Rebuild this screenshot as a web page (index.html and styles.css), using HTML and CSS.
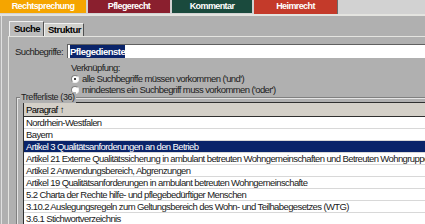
FILE: index.html
```html
<!DOCTYPE html>
<html lang="de">
<head>
<meta charset="utf-8">
<link rel="stylesheet" href="styles.css">
</head>
<body>
<div class="topbar">
  <div class="tab t-recht">Rechtsprechung</div>
  <div class="tab t-pflege">Pflegerecht</div>
  <div class="tab t-komm">Kommentar</div>
  <div class="tab t-heim">Heimrecht</div>
</div>
<div class="main">
  <div class="subtabs">
    <div class="stab active">Suche</div>
    <div class="stab">Struktur</div>
  </div>
  <div class="panel">
    <div class="searchrow">
      <span class="lbl">Suchbegriffe:</span>
      <div class="input"><span class="sel">Pflegedienste</span></div>
    </div>
    <div class="verk">
      <div class="vlbl">Verknüpfung:</div>
      <div class="radio"><span class="rb on"></span>alle Suchbegriffe müssen vorkommen ('und')</div>
      <div class="radio"><span class="rb"></span>mindestens ein Suchbegriff muss vorkommen ('oder')</div>
    </div>
    <div class="group">
      <div class="glegend">Trefferliste (36)</div>
      <div class="table">
        <div class="thead">Paragraf ↑</div>
        <div class="row">Nordrhein-Westfalen</div>
        <div class="row">Bayern</div>
        <div class="row selected">Artikel 3 Qualitätsanforderungen an den Betrieb</div>
        <div class="row">Artikel 21 Externe Qualitätssicherung in ambulant betreuten Wohngemeinschaften und Betreuten Wohngruppen</div>
        <div class="row">Artikel 2 Anwendungsbereich, Abgrenzungen</div>
        <div class="row">Artikel 19 Qualitätsanforderungen in ambulant betreuten Wohngemeinschafte</div>
        <div class="row">5.2 Charta der Rechte hilfe- und pflegebedürftiger Menschen</div>
        <div class="row">3.10.2 Auslegungsregeln zum Geltungsbereich des Wohn- und Teilhabegesetzes (WTG)</div>
        <div class="row">3.6.1 Stichwortverzeichnis</div>
      </div>
    </div>
  </div>
</div>
</body>
</html>
```
FILE: styles.css
```css
html, body {
  margin: 0;
  padding: 0;
  height: 100%;
  overflow: hidden;
}
body {
  background: #b0b0b0;
  font-family: "Liberation Sans", Arial, sans-serif;
  font-size: 9.5px;
  letter-spacing: -0.6px;
  color: #000;
}
.topbar {
  display: flex;
  gap: 2px;
  height: 14px;
  background: #d2d2d2;
  border-bottom: 2px solid #e4e4e0;
  align-items: flex-start;
}
.tab {
  width: 86px;
  height: 13px;
  line-height: 13px;
  color: #fff;
  font-weight: bold;
  text-align: center;
  font-size: 9px;
  letter-spacing: -0.6px;
}
.t-recht { background: #f5a500; }
.t-pflege { background: #8a1f2e; width: 82px; }
.t-komm { background: #1a4a3d; width: 80px; }
.t-heim {
  background: #c43a2a;
  width: 83px;
  height: 14px;
  border-right: 1px solid #6a6a6a;
}
.main {
  margin-left: 1px;
  padding: 6px 0 0 6px;
  border-left: 1px solid #e0e0e0;
}
.subtabs {
  display: flex;
  align-items: flex-end;
  height: 14px;
  padding-left: 1px;
}
.stab {
  font-weight: bold;
  font-size: 9.5px;
  letter-spacing: -0.5px;
  padding: 0 2px 0 3px;
  height: 12px;
  line-height: 12px;
  background: #d0d0cc;
  border-top: 1px solid #f0f0f0;
  border-left: 1px solid #f0f0f0;
  border-right: 1px solid #505050;
}
.stab.active {
  height: 14px;
  line-height: 14px;
  padding: 0 3px 0 4px;
  background: #bcbcbc;
}
.panel {
  border-top: 1px solid #e4e4e0;
  border-left: 1px solid #e4e4e0;
  padding: 7px 0 0 6px;
}
.searchrow {
  display: flex;
  align-items: center;
  gap: 4px;
}
.lbl { color: #202020; }
.input {
  flex: 1;
  height: 13px;
  background: #fff;
  border-top: 1px solid #606060;
  border-left: 1px solid #606060;
  padding: 0 0 0 2px;
  line-height: 13px;
}
.sel {
  background: #0a246a;
  color: #fff;
  font-weight: bold;
  font-size: 9.5px;
  letter-spacing: -0.5px;
  padding: 1px 0;
}
.verk {
  padding: 4px 0 0 56px;
  line-height: 11px;
  color: #202020;
}
.radio {
  display: flex;
  align-items: center;
  gap: 3px;
}
.rb {
  width: 6px;
  height: 6px;
  border-radius: 50%;
  background: #fff;
  border: 1px solid #808080;
  border-right-color: #f0f0f0;
  border-bottom-color: #f0f0f0;
  display: inline-block;
  position: relative;
}
.rb.on::after {
  content: "";
  position: absolute;
  left: 2px;
  top: 2px;
  width: 2px;
  height: 2px;
  border-radius: 50%;
  background: #000;
}
.group {
  margin: 2px 0 0 1px;
  border-top: 1px solid #808080;
  border-left: 1px solid #808080;
  box-shadow: inset 1px 1px 0 #e4e4e4;
  padding: 4px 0 0 6px;
  position: relative;
}
.glegend {
  position: absolute;
  top: -6px;
  left: 3px;
  background: #b0b0b0;
  padding: 0 1px;
  font-size: 9px;
  letter-spacing: -0.4px;
  line-height: 11px;
  color: #202020;
}
.table {
  background: #fff;
  border-top: 1px solid #303030;
  border-left: 1px solid #303030;
}
.thead {
  height: 13px;
  line-height: 13px;
  background: #d4d0c8;
  padding-left: 2px;
  border-bottom: 1px solid #303030;
}
.row {
  height: 11px;
  line-height: 11px;
  padding-left: 2px;
  white-space: nowrap;
  overflow: hidden;
  border-bottom: 1px solid #d8d8d8;
  color: #202020;
}
.row.selected {
  background: #0a246a;
  color: #fff;
}
```
